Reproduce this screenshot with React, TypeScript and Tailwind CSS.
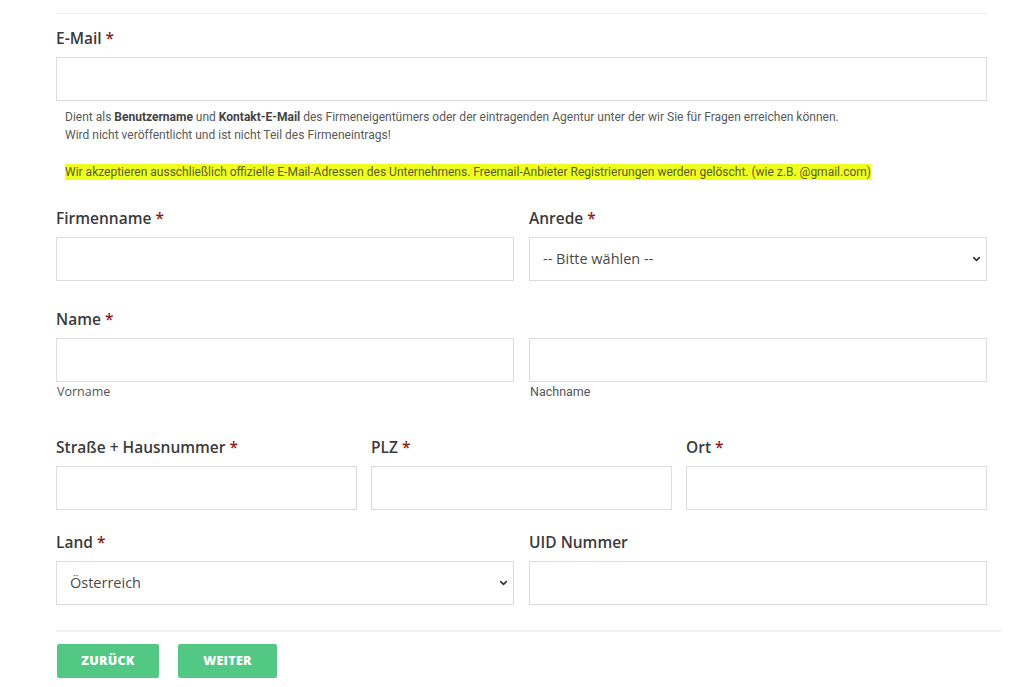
import React from 'react';
import { ChevronDown } from 'lucide-react';

const label = "block text-[15.5px] leading-[22px] font-semibold text-[#3b3b3b] mb-[8px]";
const input = "block w-full h-[44px] border border-[#dcdcdc] bg-white outline-none";

function Star() {
    return <span className="text-[#8c1c1c]"> *</span>;
}

function Select({ value }: { value: string }) {
    return (
        <div className="relative">
            <select
                defaultValue={value}
                className={`${input} appearance-none pl-[13px] pr-8 text-[14.5px] text-[#4a4a4a]`}
            >
                <option>{value}</option>
            </select>
            {/* arrow */}
            <ChevronDown className="absolute right-[5px] top-1/2 -translate-y-1/2 w-[11px] h-[11px] text-[#333] pointer-events-none" strokeWidth={3.5} />
        </div>
    );
}

export default function App() {
    return (
        <div className="min-h-screen bg-white font-['Open_Sans',sans-serif]">
            <div className="ml-[56px] w-[931px]">
                <div className="h-[13px]" />
                <div className="border-t border-[#eeeeee]" />

                {/* E-Mail */}
                <div className="mt-[13px]">
                    <label className={label}>E-Mail<Star /></label>
                    <input type="email" className={input} />
                    <div className="mt-[7px] pl-[9px] font-['Roboto',sans-serif] text-[12px] leading-[18px] text-[#5a5a5a]">
                        <p>
                            Dient als <b className="font-bold text-[#444]">Benutzername</b> und <b className="font-bold text-[#444]">Kontakt-E-Mail</b> des Firmeneigentümers oder der eintragenden Agentur unter der wir Sie für Fragen erreichen können.
                        </p>
                        <p>Wird nicht veröffentlicht und ist nicht Teil des Firmeneintrags!</p>
                        <p className="mt-[19px]">
                            <span className="bg-[#efff1e] text-[#5b5b2e] py-[1px]">
                                Wir akzeptieren ausschließlich offizielle E-Mail-Adressen des Unternehmens. Freemail-Anbieter Registrierungen werden gelöscht. (wie z.B. @gmail.com)
                            </span>
                        </p>
                    </div>
                </div>

                {/* Firmenname / Anrede */}
                <div className="grid grid-cols-2 gap-x-[15px] mt-[26px]">
                    <div>
                        <label className={label}>Firmenname<Star /></label>
                        <input type="text" className={input} />
                    </div>
                    <div>
                        <label className={label}>Anrede<Star /></label>
                        <Select value="-- Bitte wählen --" />
                    </div>
                </div>

                {/* Name */}
                <div className="mt-[27px]">
                    <label className={label}>Name<Star /></label>
                    <div className="grid grid-cols-2 gap-x-[15px]">
                        <div>
                            <input type="text" className={input} />
                            <span className="block mt-[2px] pl-[1px] text-[12.5px] leading-[16px] text-[#555]">Vorname</span>
                        </div>
                        <div>
                            <input type="text" className={input} />
                            <span className="block mt-[2px] pl-[1px] font-['Roboto',sans-serif] text-[12.5px] leading-[16px] text-[#555]">Nachname</span>
                        </div>
                    </div>
                </div>

                {/* Straße / PLZ / Ort */}
                <div className="grid grid-cols-3 gap-x-[14px] mt-[36px]">
                    <div>
                        <label className={label}>Straße + Hausnummer<Star /></label>
                        <input type="text" className={input} />
                    </div>
                    <div>
                        <label className={label}>PLZ<Star /></label>
                        <input type="text" className={input} />
                    </div>
                    <div>
                        <label className={label}>Ort<Star /></label>
                        <input type="text" className={input} />
                    </div>
                </div>

                {/* Land / UID */}
                <div className="grid grid-cols-2 gap-x-[15px] mt-[21px]">
                    <div>
                        <label className={label}>Land<Star /></label>
                        <Select value="Österreich" />
                    </div>
                    <div>
                        <label className={label}>UID Nummer</label>
                        <input type="text" className={input} />
                    </div>
                </div>
            </div>

            {/* Divider + buttons */}
            <div className="ml-[56px] w-[945px] mt-[25px] border-t-2 border-[#f0f0f0]" />
            <div className="ml-[57px] mt-[12px] flex gap-[19px]">
                <button className="w-[102px] h-[34px] rounded-[2px] bg-[#53c884] text-white text-[12.5px] font-extrabold tracking-[0.3px]">
                    ZURÜCK
                </button>
                <button className="w-[99px] h-[34px] rounded-[2px] bg-[#53c884] text-white text-[12.5px] font-extrabold tracking-[0.3px]">
                    WEITER
                </button>
            </div>
        </div>
    );
}
